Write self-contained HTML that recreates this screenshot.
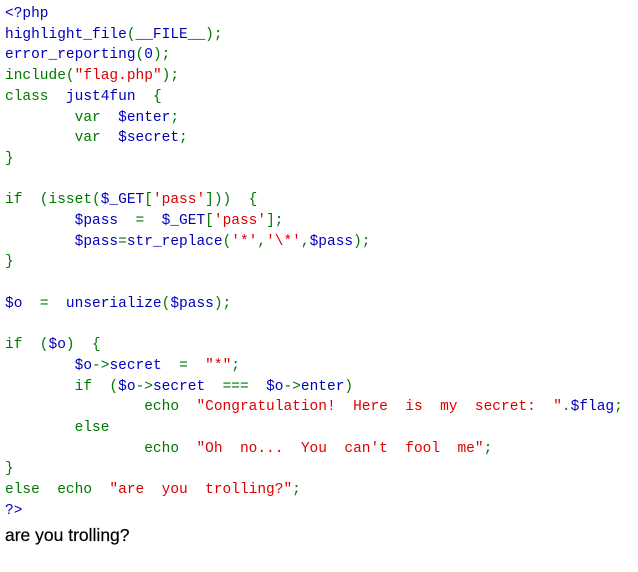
<!DOCTYPE html>
<html><head><meta charset="utf-8"><style>
html,body{margin:0;padding:0;background:#fff;width:638px;height:572px;overflow:hidden}
code{display:block;position:absolute;left:5px;top:4px;font-family:"Liberation Mono","Noto Sans CJK SC",monospace;font-size:14.5px;line-height:20.7px;white-space:pre;letter-spacing:0px}
.d{color:#0000BB}.k{color:#007700}.s{color:#DD0000}
.out{position:absolute;left:5px;top:524px;font-family:"Liberation Sans",sans-serif;font-size:17.5px;color:#000;line-height:22px;-webkit-text-stroke:0.2px #000}
</style></head><body>
<code><span class="d">&lt;?php
highlight_file</span><span class="k">(</span><span class="d">__FILE__</span><span class="k">);
</span><span class="d">error_reporting</span><span class="k">(</span><span class="d">0</span><span class="k">);
include(</span><span class="s">"flag.php"</span><span class="k">);
class  </span><span class="d">just4fun  </span><span class="k">{
        var  </span><span class="d">$enter</span><span class="k">;
        var  </span><span class="d">$secret</span><span class="k">;
}

if  (isset(</span><span class="d">$_GET</span><span class="k">[</span><span class="s">'pass'</span><span class="k">]))  {
        </span><span class="d">$pass  </span><span class="k">=  </span><span class="d">$_GET</span><span class="k">[</span><span class="s">'pass'</span><span class="k">];
        </span><span class="d">$pass</span><span class="k">=</span><span class="d">str_replace</span><span class="k">(</span><span class="s">'*'</span><span class="k">,</span><span class="s">'\*'</span><span class="k">,</span><span class="d">$pass</span><span class="k">);
}

</span><span class="d">$o  </span><span class="k">=  </span><span class="d">unserialize</span><span class="k">(</span><span class="d">$pass</span><span class="k">);

if  (</span><span class="d">$o</span><span class="k">)  {
        </span><span class="d">$o</span><span class="k">-&gt;</span><span class="d">secret  </span><span class="k">=  </span><span class="s">"*"</span><span class="k">;
        if  (</span><span class="d">$o</span><span class="k">-&gt;</span><span class="d">secret  </span><span class="k">===  </span><span class="d">$o</span><span class="k">-&gt;</span><span class="d">enter</span><span class="k">)
                echo  </span><span class="s">"Congratulation!  Here  is  my  secret:  "</span><span class="k">.</span><span class="d">$flag</span><span class="k">;
        else
                echo  </span><span class="s">"Oh  no...  You  can't  fool  me"</span><span class="k">;
}
else  echo  </span><span class="s">"are  you  trolling?"</span><span class="k">;
</span><span class="d">?&gt;</span></code>
<div class="out">are you trolling?</div>
</body></html>
